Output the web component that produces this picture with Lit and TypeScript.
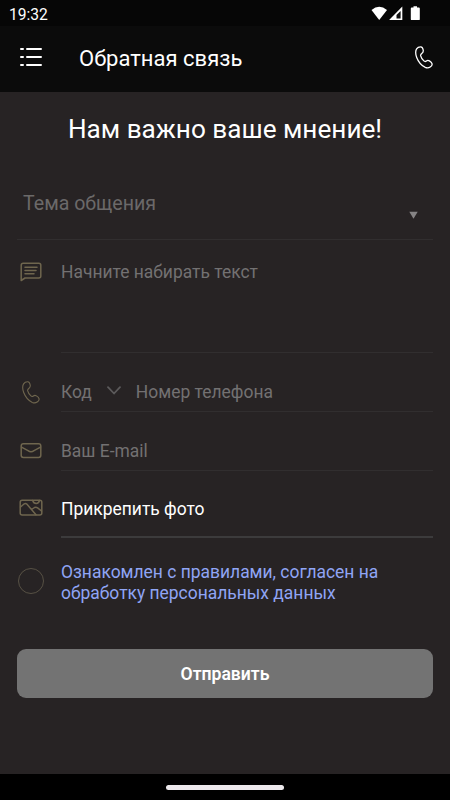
import { LitElement, html, css, svg } from "lit";
import { customElement } from "lit/decorators.js";

const phoneIcon = () => html`<svg width="18" height="23" viewBox="0 0 18 23">
  <path
    d="M1.6 2.9C2.6 1.4 4.2.7 5.8.8c1.5.2 2.1 1.5 2.4 3.2.3 1.600-.2 2.500-1.200 3.300-1 .8-1.600 1.300-1.400 2.400.4 1.700 1.700 3.700 3.300 5.200.8.8 1.600.8 2.500.1.900-.7 1.900-.8 3-.1 1.300.8 2.500 1.900 2.700 2.900.2 1.200-.7 2.400-1.900 3.200-1.500 1-3.300 1.100-4.900.4C6.900 19.800 3.400 16 1.700 11.500.6 8.400.3 5 1.600 2.900Z"
  />
</svg>`;

@customElement("app-root")
export class AppRoot extends LitElement {
  static styles = css`
    :host {
      display: flex;
      flex-direction: column;
      box-sizing: border-box;
      width: 450px;
      height: 800px;
      overflow: hidden;
      background: #272324;
      color: #fff;
      font-family: Roboto, "Noto Sans", sans-serif;
      font-size: 17.45px;
      line-height: 21px;
    }
    svg {
      display: block;
      flex: none;
      fill: none;
      stroke: currentColor;
      stroke-linecap: round;
      stroke-linejoin: round;
    }
    .status {
      display: flex;
      align-items: center;
      height: 26px;
      padding: 0 30px 0 9px;
      background: #060606;
      font-size: 15.600px;
    }
    .clock {
      flex: 1;
      padding-top: 4px;
    }
    .status svg {
      margin-top: 1px;
    }
    .bar {
      display: flex;
      align-items: center;
      height: 66px;
      padding: 0 17.500px 0 19px;
      background: #0b0b0b;
    }
    .bar h1 {
      flex: 1;
      margin: 0 0 0 36px;
      font-size: 22px;
      line-height: 26px;
      font-weight: 400;
    }
    .bar svg {
      margin-bottom: 4px;
      stroke-width: 1.3;
    }
    .bar svg.menu {
      margin-bottom: 4px;
      stroke-width: 2;
    }
    main {
      flex: 1;
      display: flex;
      flex-direction: column;
      padding: 0 17px;
    }
    h2 {
      margin: 21px 0 0;
      text-align: center;
      font-size: 26.150px;
      line-height: 32px;
      font-weight: 400;
    }
    .topic {
      display: flex;
      justify-content: space-between;
      box-sizing: border-box;
      height: 95px;
      padding: 47px 15px 0 6px;
      border-bottom: 1px solid #312e2f;
      color: #6b6969;
      font-size: 19.600px;
      line-height: 24px;
    }
    .topic svg {
      margin-top: 19px;
      fill: #858384;
      stroke: none;
    }
    .row {
      display: flex;
    }
    .icon {
      display: flex;
      justify-content: center;
      width: 27px;
      margin-right: 17px;
      color: #6f664e;
    }
    .field {
      flex: 1;
      display: flex;
      box-sizing: border-box;
      color: #737172;
      border-bottom: 1px solid #312e2f;
    }
    .message .field {
      height: 113px;
      padding-top: 22px;
    }
    .message .icon {
      padding-top: 22px;
    }
    .phone .field {
      height: 59px;
      padding-top: 29px;
    }
    .phone .icon {
      padding-top: 28px;
    }
    .phone .icon svg {
      stroke-width: 1.1;
    }
    .chevron {
      margin: 4px 15px 0 15px;
      color: #5c5a5b;
      stroke-width: 1.8;
    }
    .email .field {
      height: 59px;
      padding-top: 29px;
    }
    .email .icon {
      padding-top: 31px;
    }
    .photo .field {
      height: 67px;
      padding-top: 28px;
      color: #fff;
      border-bottom: 2px solid #3c3b3c;
    }
    .photo .icon {
      padding-top: 28px;
    }
    .consent {
      display: flex;
      padding-top: 24px;
      color: #90a5f5;
    }
    .check {
      box-sizing: border-box;
      width: 26px;
      height: 26px;
      margin: 6px 17px 0 1px;
      border: 1px solid #575144;
      border-radius: 50%;
    }
    button {
      height: 49px;
      margin: 45px 0 0;
      padding: 0;
      border: 0;
      border-radius: 9px;
      background: #737373;
      color: #fff;
      font: 600 17.600px Roboto, "Noto Sans", sans-serif;
    }
    footer {
      display: flex;
      justify-content: center;
      align-items: center;
      height: 26px;
      background: #000;
    }
    .handle {
      width: 118px;
      height: 5px;
      border-radius: 3px;
      background: #ece8ec;
    }
  `;

  render() {
    return html`
      <div class="status">
        <span class="clock">19:32</span>
        <svg width="49" height="16" viewBox="0 0 49 16">
          <path d="M.5 4Q8.200-2.300 16 4L8.200 14Z" fill="#fff" stroke="none" />
          <path d="M31.300.5V14H18.100Z" fill="#fff" stroke="none" />
          <path d="M29.600 5V12.600H25.500V9Z" fill="#111" stroke="none" />
          <path
            d="M42.500 1.500V.3h3.500V1.500h1.900q.9 0 .9.900V13.200q0 .9-.9.900h-7.200q-.9 0-.9-.9V2.400q0-.9.900-.9Z"
            fill="#fff"
            stroke="none"
          />
        </svg>
      </div>
      <div class="bar">
        <svg class="menu" width="24" height="20" viewBox="0 0 24 20">
          ${[2, 10, 18].map(
            (y) => svg`<path d="M2 ${y}h2M8 ${y}h14" />`
          )}
        </svg>
        <h1>Обратная связь</h1>
        ${phoneIcon()}
      </div>
      <main>
        <h2>Нам важно ваше мнение!</h2>
        <div class="topic">
          <span>Тема общения</span>
          <svg width="9" height="8" viewBox="0 0 9 8"><path d="M.3.800h8.400L4.500 7.800Z" /></svg>
        </div>
        <div class="row message">
          <div class="icon">
            <svg width="22" height="20" viewBox="0 0 22 20" stroke-width="1.500">
              <path d="M1.200 18.500V3.200Q1.200 1.200 3.200 1.200H18.800Q20.800 1.200 20.800 3.200V14Q20.800 16 18.800 16H5Z" />
              <path d="M5 5.200H17M5 8.500H16M5 11.700H14" />
            </svg>
          </div>
          <div class="field">Начните набирать текст</div>
        </div>
        <div class="row phone">
          <div class="icon">${phoneIcon()}</div>
          <div class="field">
            <span>Код</span>
            <svg class="chevron" width="14" height="9" viewBox="0 0 14 9"><path d="M1 1.200 7 7.500 13 1.200" /></svg>
            <span>Номер телефона</span>
          </div>
        </div>
        <div class="row email">
          <div class="icon">
            <svg width="22" height="16" viewBox="0 0 22 16" stroke-width="1.500">
              <rect x="1.200" y=".8" width="19.600" height="13.600" rx="2.200" />
              <path d="M1.500 4.200 8 7.600Q11 9.800 14 7.600L20.500 4.200" />
            </svg>
          </div>
          <div class="field">Ваш E-mail</div>
        </div>
        <div class="row photo">
          <div class="icon">
            <svg width="24" height="18" viewBox="0 0 24 18" stroke-width="1.500">
              <rect x="1.200" y="1.300" width="21.600" height="14.800" rx="2" />
              <path d="M1.500 8 5.300 4.800Q6.600 3.900 7.800 5.100L17 15.800M12.500 10.500 15.500 8.500Q17 7.700 18.600 8.800L22.500 12M13.700 1.500Q14.500 4.500 17.300 4.500 19.800 4.300 20.500 1.500" />
            </svg>
          </div>
          <div class="field">Прикрепить фото</div>
        </div>
        <div class="consent">
          <div class="check"></div>
          <div>Ознакомлен с правилами, согласен на<br />обработку персональных данных</div>
        </div>
        <button>Отправить</button>
      </main>
      <footer><div class="handle"></div></footer>
    `;
  }
}
